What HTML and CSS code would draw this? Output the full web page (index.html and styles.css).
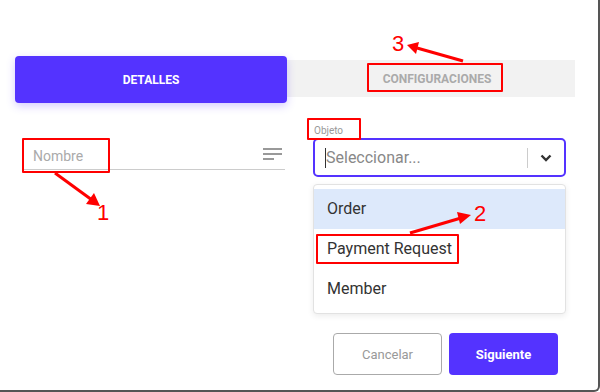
FILE: index.html
```html
<!DOCTYPE html>
<html lang="es">
<head>
  <meta charset="UTF-8" />
  <title>Nuevo</title>
  <link rel="stylesheet" href="styles.css">
</head>
<body>
  <div class="dialog">
    <div class="tabs">
      <div class="tab active">DETALLES</div>
      <div class="tab">CONFIGURACIONES</div>
    </div>

    <div class="form-row">
      <div class="field-name">
        <span class="placeholder">Nombre</span>
        <svg class="lines-icon" width="19" height="12" viewBox="0 0 19 12">
          <rect x="0" y="0" width="19" height="2" fill="#999"/>
          <rect x="0" y="5" width="19" height="2" fill="#999"/>
          <rect x="0" y="10" width="11" height="2" fill="#999"/>
        </svg>
      </div>
      <div class="field-object">
        <label class="small-label">Objeto</label>
        <div class="select">
          <span class="caret"></span>
          <span class="select-text">Seleccionar...</span>
          <span class="select-sep"></span>
          <svg class="chevron" width="12" height="8" viewBox="0 0 12 8">
            <path d="M1.5 1.5 L6 6 L10.5 1.5" fill="none" stroke="#333" stroke-width="2.4"/>
          </svg>
        </div>
        <ul class="menu">
          <li class="focused">Order</li>
          <li>Payment Request</li>
          <li>Member</li>
        </ul>
      </div>
    </div>

    <div class="actions">
      <button class="btn-outline">Cancelar</button>
      <button class="btn-primary">Siguiente</button>
    </div>

    <!-- anotaciones -->
    <div class="mark mark-name"></div>
    <div class="mark mark-object"></div>
    <div class="mark mark-payment"></div>
    <div class="mark mark-config"></div>
    <span class="num num-1">1</span>
    <span class="num num-2">2</span>
    <span class="num num-3">3</span>
    <svg class="arrows" width="600" height="392" viewBox="0 0 600 392">
      <g stroke="#ff0000" stroke-width="3" fill="#ff0000">
        <line x1="55" y1="173" x2="92" y2="200"/>
        <polygon points="100,206 86,204 94,193" stroke="none"/>
        <line x1="410" y1="233" x2="461" y2="218"/>
        <polygon points="471,215 460,224 457,212" stroke="none"/>
        <line x1="463" y1="61" x2="417" y2="48"/>
        <polygon points="407,45 419,42 416,54" stroke="none"/>
      </g>
    </svg>
  </div>
</body>
</html>
```
FILE: styles.css
```css
html, body {
  margin: 0;
  padding: 0;
  background: white;
}
body {
  font-family: Roboto, "Liberation Sans", sans-serif;
}
.dialog {
  position: relative;
  width: 600px;
  height: 392px;
  box-sizing: border-box;
  padding: 60px 23px 0 15px;
  border-right: 2px solid #555;
  border-bottom: 2px solid #555;
  border-bottom-right-radius: 6px;
  overflow: hidden;
}
.tabs {
  display: flex;
  height: 37px;
  background: #f2f2f2;
}
.tab {
  flex: 1;
  display: flex;
  align-items: center;
  justify-content: center;
  padding-left: 12px;
  font-size: 12px;
  font-weight: bold;
  color: #aaa;
}
.tab.active {
  flex: none;
  width: 272px;
  padding-left: 0;
  margin-top: -4px;
  height: 47px;
  background: #5433ff;
  color: white;
  border-radius: 4px;
  box-shadow: 0 3px 8px rgba(84, 51, 255, 0.25);
}
.form-row {
  display: flex;
  margin-top: 28px;
  padding-left: 7px;
  gap: 28px;
}
.field-name {
  width: 263px;
  height: 45px;
  display: flex;
  align-items: flex-end;
  justify-content: space-between;
  border-bottom: 1px solid #ccc;
  box-sizing: border-box;
  padding: 0 3px 5px 11px;
}
.placeholder {
  font-size: 14px;
  color: #aaa;
  line-height: 16px;
}
.lines-icon {
  margin-bottom: 4px;
}
.field-object {
  position: relative;
  width: 253px;
}
.small-label {
  display: block;
  font-size: 10px;
  color: #999;
  height: 13px;
  padding-left: 1px;
}
.select {
  display: flex;
  align-items: center;
  height: 39px;
  box-sizing: border-box;
  border: 2px solid #5433ff;
  border-radius: 5px;
  padding: 0 12px 0 10px;
}
.caret {
  width: 1px;
  height: 20px;
  background: #333;
}
.select-text {
  flex: 1;
  font-size: 16px;
  color: #888;
}
.select-sep {
  width: 1px;
  height: 20px;
  background: #ccc;
  margin-right: 12px;
}
.menu {
  position: absolute;
  left: 0;
  right: 0;
  top: 59px;
  margin: 0;
  padding: 4px 0;
  list-style: none;
  background: white;
  border: 1px solid #e2e2e2;
  border-radius: 4px;
  box-shadow: 0 2px 6px rgba(0, 0, 0, 0.08);
}
.menu li {
  height: 40px;
  line-height: 40px;
  padding-left: 13px;
  font-size: 16px;
  color: #333;
}
.menu li.focused {
  background: #dde9fb;
}
.actions {
  display: flex;
  justify-content: flex-end;
  gap: 7px;
  margin-top: 156px;
  padding-right: 17px;
}
.actions button {
  width: 109px;
  height: 42px;
  border-radius: 4px;
  font-family: inherit;
  font-size: 13px;
}
.btn-outline {
  background: white;
  border: 1px solid #aaa;
  color: #999;
}
.btn-primary {
  background: #5433ff;
  border: none;
  color: white;
  font-weight: bold;
}
.mark {
  position: absolute;
  border: 2px solid #ff0000;
  border-radius: 1px;
  box-sizing: border-box;
}
.mark-name { left: 22px; top: 138px; width: 88px; height: 35px; }
.mark-object { left: 307px; top: 118px; width: 54px; height: 22px; }
.mark-payment { left: 316px; top: 234px; width: 143px; height: 30px; }
.mark-config { left: 367px; top: 63px; width: 136px; height: 29px; }
.num {
  position: absolute;
  font-family: "Liberation Sans", sans-serif;
  font-size: 22px;
  line-height: 22px;
  color: #ff0000;
}
.num-1 { left: 97px; top: 202px; }
.num-2 { left: 474px; top: 203px; }
.num-3 { left: 392px; top: 33px; }
.arrows {
  position: absolute;
  left: 0;
  top: 0;
  pointer-events: none;
}
```
